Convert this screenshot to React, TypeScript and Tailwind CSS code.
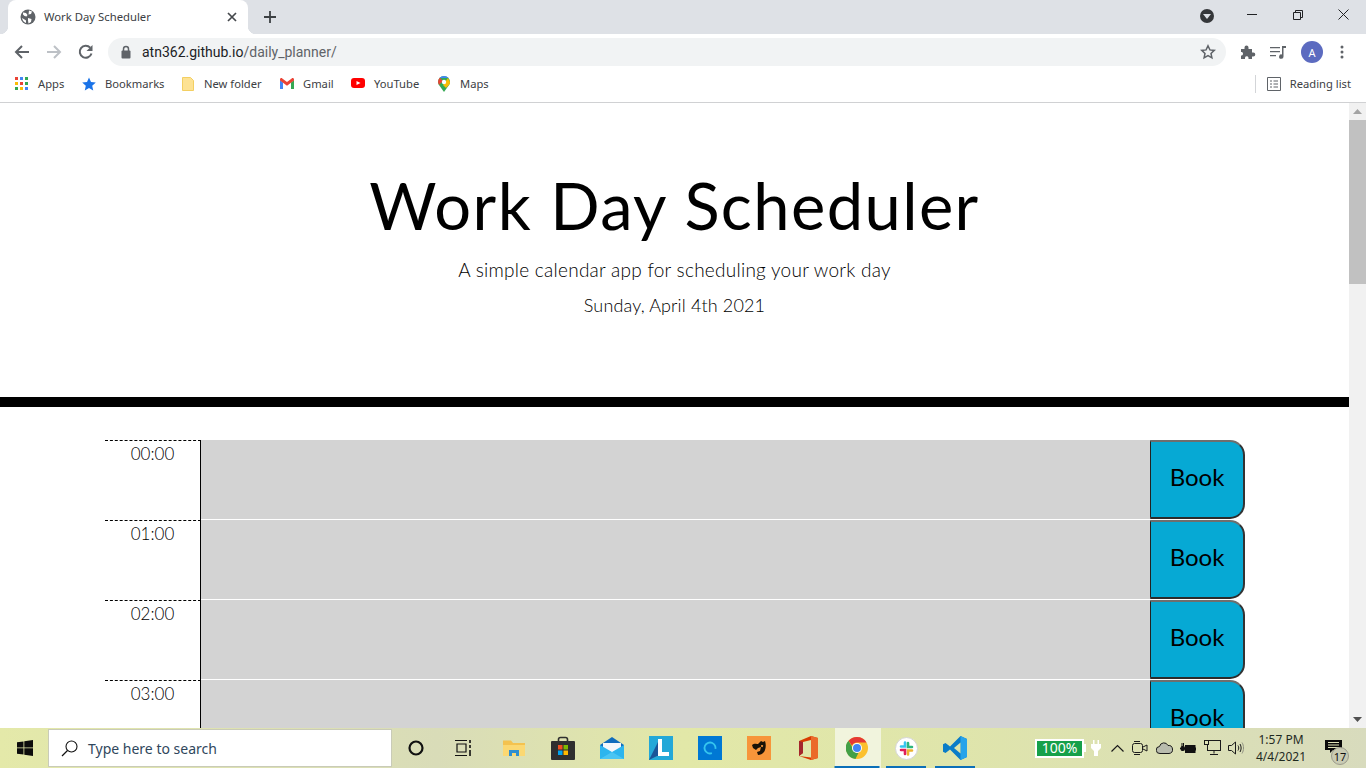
import React from "react";

const ui = { fontFamily: '"Noto Sans", "Open Sans", sans-serif' };
const hand = { fontFamily: 'Lato, "Open Sans", sans-serif' };

function Globe() {
  return (
    <svg width="16" height="16" viewBox="0 0 16 16">
      <circle cx="8" cy="8" r="7.5" fill="#5f6368" />
      <path d="M3 3.5l3 .5 1.5 2-1 1.5-2-.5-1.5-1.5zM9 1.5l3 1-1 2.5-2.5.5zM8 9l3.5 1-.5 3-2.5 1.5-.5-3zM2 9l2.5 1.5 1.500 1v2.500C4 13.500 2.500 11.500 2 9z" fill="#fff" />
    </svg>
  );
}

function Tab() {
  return (
    <div className="relative ml-[8px] flex h-[34px] w-[240px] items-center rounded-t-[8px] bg-white pl-[12px] pr-[11px]">
      <Globe />
      <span className="ml-[8px] flex-1 text-[11.3px] leading-none text-[#3c4043]">Work Day Scheduler</span>
      <svg width="10" height="10" viewBox="0 0 10 10" stroke="#45484c" strokeWidth="1.7" fill="none">
        <path d="M1 1l8 8M9 1l-8 8" />
      </svg>
      <span className="absolute bottom-0 left-[-8px] h-[8px] w-[8px] bg-[radial-gradient(circle_at_0_0,#dee1e6_8px,#fff_8.5px)]" />
      <span className="absolute bottom-0 right-[-8px] h-[8px] w-[8px] bg-[radial-gradient(circle_at_100%_0,#dee1e6_8px,#fff_8.5px)]" />
    </div>
  );
}

function TabStrip() {
  return (
    <div className="flex h-[34px] items-start bg-[#dee1e6]" style={ui}>
      <Tab />
      <svg className="ml-[15px] mt-[10px]" width="14" height="14" viewBox="0 0 14 14" stroke="#3c4043" strokeWidth="1.8">
        <path d="M7 1v12M1 7h12" />
      </svg>
      <div className="flex-1" />
      <div className="mt-[9px] flex h-[14px] w-[14px] items-center justify-center rounded-full bg-[#35373a]">
        <svg width="8" height="5" viewBox="0 0 8 5"><path d="M0 0h8L4 5z" fill="#dee1e6" /></svg>
      </div>
      <div className="ml-[16px] flex w-[136px] pl-[15px] pt-[8px] text-[#202124]">
        <svg width="14" height="14" viewBox="0 0 14 14" stroke="#202124" fill="none"><path d="M2 6.500h10" /></svg>
        <svg className="ml-[32px]" width="14" height="14" viewBox="0 0 14 14" stroke="#202124" fill="none"><path d="M2.500 4.500h7v7h-7zM4.500 4.500V2.500h7v7h-2" /></svg>
        <svg className="ml-[32px]" width="14" height="14" viewBox="0 0 14 14" stroke="#202124" fill="none"><path d="M1.500 1.500l10 10M11.500 1.500l-10 10" /></svg>
      </div>
    </div>
  );
}

function Toolbar() {
  return (
    <div className="flex h-[34px] items-center bg-white pt-[2px]" style={ui}>
      <svg className="ml-[14px]" width="16" height="16" viewBox="0 0 16 16" fill="none" stroke="#5f6368" strokeWidth="2"><path d="M15 8H2M8 2L2 8l6 6" /></svg>
      <svg className="ml-[16px]" width="16" height="16" viewBox="0 0 16 16" fill="none" stroke="#bdc1c6" strokeWidth="2"><path d="M1 8h13M8 2l6 6-6 6" /></svg>
      <svg className="ml-[16px]" width="16" height="16" viewBox="0 0 16 16" fill="none" stroke="#5f6368" strokeWidth="2"><path d="M13.500 9.500A6 6 0 1 1 12.200 3.700" /><path d="M14.500 1v6h-6z" fill="#5f6368" stroke="none" /></svg>
      <div className="ml-[14px] flex h-[28px] w-[1118px] items-center rounded-full bg-[#f1f3f4] pl-[12px] pr-[10px]">
        <svg width="12" height="14" viewBox="0 0 12 14">
          <path d="M3.500 6V4a2.500 2.500 0 0 1 5 0v2" fill="none" stroke="#5f6368" strokeWidth="1.500" />
          <rect x="1.500" y="5.500" width="9" height="8" rx="1" fill="#5f6368" />
        </svg>
        <span className="ml-[10px] flex-1 text-[14px] leading-none text-[#202124]" style={{ fontFamily: 'Roboto, sans-serif' }}>
          atn362.github.io<span className="text-[#5f6368]">/daily_planner/</span>
        </span>
        <svg width="16" height="16" viewBox="0 0 16 16" fill="none" stroke="#5f6368" strokeWidth="1.500"><path d="M8 1.800l1.900 4.100 4.400.5-3.300 3 .9 4.400L8 11.600l-3.900 2.200.9-4.400-3.300-3 4.400-.5z" /></svg>
      </div>
      <svg className="ml-[14px]" width="16" height="16" viewBox="0 0 16 16"><path d="M1 5h3.500V3.500a2 2 0 0 1 4 0V5H12v3.500h1.300a2 2 0 0 1 0 4H12V15H8.500v-1.300a1.800 1.800 0 0 0-3.500 0V15H1v-3.500h1a2 2 0 0 0 0-3.500H1z" fill="#5f6368" /></svg>
      <svg className="ml-[14px]" width="16" height="16" viewBox="0 0 16 16" fill="#5f6368"><path d="M0 3h10v1.300H0zM0 7h10v1.300H0zM0 11h6v1.300H0z" /><path d="M12 2h4v2h-2.500v8.500a2.200 2.200 0 1 1-1.500-2z" /></svg>
      <div className="ml-[15px] flex h-[22px] w-[22px] items-center justify-center rounded-full bg-[#5c6bc0] text-[11px] leading-none text-white">A</div>
      <svg className="ml-[17px]" width="4" height="14" viewBox="0 0 4 14" fill="#5f6368"><circle cx="2" cy="2" r="1.500" /><circle cx="2" cy="7" r="1.500" /><circle cx="2" cy="12" r="1.500" /></svg>
    </div>
  );
}

function AppsIcon() {
  const c = ["#ea4335", "#4285f4", "#34a853", "#fbbc05", "#ea4335", "#34a853", "#34a853", "#fbbc05", "#4285f4"];
  return (
    <div className="grid h-[13px] w-[13px] grid-cols-3 gap-[2px]">
      {c.map((x, i) => <span key={i} className="h-[3px] w-[3px]" style={{ background: x }} />)}
    </div>
  );
}

function Mark({ icon, label, gap, w }: { icon: React.ReactNode; label: string; gap: string; w: string }) {
  return (
    <div className={"flex items-center " + w}>
      {icon}
      <span className={"text-[11.2px] leading-none text-[#3c4043] " + gap}>{label}</span>
    </div>
  );
}

function Bookmarks() {
  return (
    <div className="flex h-[35px] items-center border-b border-[#d0d1d3] bg-white pb-[3px] pl-[15px] pr-[15px]" style={ui}>
      <Mark w="w-[67px]" gap="ml-[10px]" label="Apps" icon={<AppsIcon />} />
      <Mark w="w-[100px]" gap="ml-[9px]" label="Bookmarks" icon={<svg width="14" height="14" viewBox="0 0 14 14"><path d="M7 .5l2 4.500 4.800.5-3.600 3.200 1 4.800L7 11l-4.200 2.500 1-4.800L.2 5.500 5 5z" fill="#1a73e8" /></svg>} />
      <Mark w="w-[98px]" gap="ml-[10px]" label="New folder" icon={<svg width="12" height="14" viewBox="0 0 12 14"><path d="M.5.500h8l3 3v10H.5z" fill="#fde293" stroke="#f3cf62" /></svg>} />
      <Mark w="w-[71px]" gap="ml-[9px]" label="Gmail" icon={<svg width="14" height="11" viewBox="0 0 14 11"><path d="M0 2v9h3V4.500z" fill="#4285f4" /><path d="M14 2v9h-3V4.500z" fill="#34a853" /><path d="M0 1.500C0 .3 1.300-.3 2.300.4L7 4l4.700-3.600c1-.7 2.300-.1 2.300 1.100v1L11 4.800 7 7.800 3 4.800 0 2.500z" fill="#ea4335" /></svg>} />
      <Mark w="w-[87px]" gap="ml-[9px]" label="YouTube" icon={<svg width="14" height="10" viewBox="0 0 14 10"><rect width="14" height="10" rx="3" fill="#f00" /><path d="M5.500 3v4L9.500 5z" fill="#fff" /></svg>} />
      <Mark w="w-[60px]" gap="ml-[10px]" label="Maps" icon={<svg width="12" height="16" viewBox="0 0 12 16"><path d="M6 0a6 6 0 0 1 6 6c0 1-.3 1.900-.8 2.700L6 16 .8 8.700A6 6 0 0 1 0 6a6 6 0 0 1 6-6z" fill="#34a853" /><path d="M1.500 2l9 0A6 6 0 0 0 6 0 6 6 0 0 0 1.500 2z" fill="#4285f4" /><path d="M0 6a6 6 0 0 1 1.800-4.200L5 5l-4 4z" fill="#ea4335" /><path d="M12 6c0 1-.3 1.900-.8 2.700L8 12 5 9l5-7z" fill="#fbbc05" /><circle cx="6" cy="6" r="2.200" fill="#fff" /></svg>} />
      <div className="flex-1" />
      <span className="h-[18px] w-px bg-[#d3d5d8]" />
      <svg className="ml-[11px]" width="14" height="14" viewBox="0 0 14 14" fill="none" stroke="#5f6368"><path d="M.5.500h13v13H.5zM3 4h2M6.500 4H11M3 7h2M6.500 7H11M3 10h2M6.500 10H11" /></svg>
      <span className="ml-[9px] text-[11.2px] leading-none text-[#3c4043]">Reading list</span>
    </div>
  );
}

function Scrollbar() {
  return (
    <div className="flex w-[17px] flex-col items-center bg-[#f1f1f1]">
      <div className="flex h-[17px] items-center justify-center">
        <svg width="9" height="5" viewBox="0 0 9 5"><path d="M4.500 0L9 5H0z" fill="#a3a3a3" /></svg>
      </div>
      <div className="h-[164px] w-full bg-[#c1c1c1]" />
      <div className="flex-1" />
      <div className="flex h-[17px] items-center justify-center">
        <svg width="9" height="5" viewBox="0 0 9 5"><path d="M0 0h9L4.500 5z" fill="#505050" /></svg>
      </div>
    </div>
  );
}

function Row({ time }: { time: string }) {
  return (
    <div className="flex h-[80px] shrink-0">
      <div className="h-full w-[96px] border-r border-t border-dashed border-black pt-[1px] text-center [border-right-style:solid]">
        <div className="h-[22px] text-[17px] font-light leading-[24px] text-black" style={hand}>{time}</div>
      </div>
      <div className="h-full flex-1 border-b border-white bg-[#d3d3d3]" />
      <button className="flex h-[79px] w-[95px] items-center justify-center rounded-r-[15px] border-2 border-b-[#2b2b2b] border-l-[1px] border-l-[#222] border-r-[#333] border-t-[#6e6e6e] bg-[#06a9d4] pb-[6px] text-[24px] leading-none text-black" style={hand}>
        Book
      </button>
    </div>
  );
}

function Page() {
  return (
    <div className="flex h-[625px] w-full overflow-hidden bg-white">
      <main className="flex min-w-0 flex-1 flex-col">
        <header className="flex h-[294px] shrink-0 flex-col items-center text-black" style={hand}>
          <h1 className="mt-[62px] h-[80px] text-[65px] font-normal leading-[80px] tracking-[1.4px]">Work Day Scheduler</h1>
          <p className="mt-[7px] h-[36px] text-[19px] font-light leading-[36px] tracking-[0.26px]">A simple calendar app for scheduling your work day</p>
          <p className="h-[35px] text-[18px] font-light leading-[35px] tracking-[0.14px]">Sunday, April 4th 2021</p>
        </header>
        <div className="h-[10px] shrink-0 bg-black" />
        <div className="ml-[105px] mt-[33px] flex w-[1140px] flex-col">
          {["00:00", "01:00", "02:00", "03:00"].map((t) => <Row key={t} time={t} />)}
        </div>
      </main>
      <Scrollbar />
    </div>
  );
}

const icons: { node: React.ReactNode; bar?: string; active?: boolean }[] = [
  { node: <svg width="18" height="18" viewBox="0 0 18 18" fill="none" stroke="#111" strokeWidth="2.200"><circle cx="9" cy="9" r="6.500" /></svg> },
  { node: <svg width="18" height="18" viewBox="0 0 18 18" fill="none" stroke="#111" strokeWidth="1.200" className="-translate-x-[2px]"><path d="M1 1.500h12M3 5h9v8H3zM1 16.500h12" /><path d="M16 1v3M16 6v3M16 11v6" strokeWidth="1.600" /></svg> },
  { node: <svg width="22" height="18" viewBox="0 0 22 18"><path d="M0 1.500h8l2 2.500h12v13H0z" fill="#f4c24f" /><path d="M0 6h22v11H0z" fill="#fbd872" /><path d="M6 17v-6h10v6h-3v-3H9v3z" fill="#2e8fd0" /></svg> },
  { node: <svg width="24" height="24" viewBox="0 0 24 24"><path d="M7.500 7V3.500A2 2 0 0 1 9.500 1.500h5a2 2 0 0 1 2 2V7" fill="none" stroke="#2f2f2f" strokeWidth="1.600" /><rect y="5" width="24" height="19" rx="1" fill="#2f2f2f" /><rect x="7" y="9" width="4.500" height="4.500" fill="#f25022" /><rect x="12.500" y="9" width="4.500" height="4.500" fill="#7fba00" /><rect x="7" y="14.500" width="4.500" height="4.500" fill="#00a4ef" /><rect x="12.500" y="14.500" width="4.500" height="4.500" fill="#ffb900" /></svg> },
  { node: <svg width="24" height="22" viewBox="0 0 24 22"><path d="M12 0l12 8v14H0V8z" fill="#0f6cbd" /><path d="M3 6h18v7l-9 5-9-5z" fill="#f3f7fb" /><path d="M0 8l12 7 12-7v14H0z" fill="#2cb5ee" /><path d="M0 22L12 15l12 7z" fill="#5fd0f7" opacity=".6" /></svg> },
  { node: <div className="relative h-[24px] w-[24px] bg-[#23a8d8]"><svg width="24" height="24" viewBox="0 0 24 24"><path d="M0 24L10 4v13h9l1 3H8z" fill="#173f8a" opacity=".8" /><path d="M9 3h4v13h7v4H9z" fill="#fff" /></svg></div> },
  { node: <div className="flex h-[24px] w-[24px] items-center justify-center bg-[#0078d4]"><svg width="14" height="14" viewBox="0 0 14 14"><circle cx="7" cy="7" r="5.500" fill="none" stroke="#35c5ee" strokeWidth="1.800" strokeDasharray="28 6" transform="rotate(70 7 7)" /></svg></div> },
  { node: <div className="flex h-[24px] w-[24px] items-center justify-center bg-[#f7953a]"><svg width="17" height="17" viewBox="0 0 17 17"><path d="M1 5c2-2 5-1 6-1l3-3 2 1 2-1c1 3 1 6 0 9-1 3-4 5-7 5l-1-3 3-1 1-4-3 1-2 2-3-2zM11 5a1 1 0 1 0 .1 0z" fill="#1a1208" /></svg></div> },
  { node: <svg width="19" height="24" viewBox="0 0 19 24"><path d="M12 0l7 2v20l-7 2-12-4 12 1.500V4L4 6v11l-4 3V5z" fill="#d83b01" /><path d="M12 0l7 2v20l-7 2z" fill="#eb6a2a" /><path d="M0 5l4 1v11l-4 3z" fill="#a4262c" /></svg> },
  {
    active: true,
    bar: "w-[45px]",
    node: <svg width="22" height="22" viewBox="0 0 22 22">
      <circle cx="11" cy="11" r="11" fill="#fbc02d" />
      <path d="M11 0a11 11 0 0 1 9.500 5.500H11a5.500 5.500 0 0 0-5 3.200L2.500 3.800A11 11 0 0 1 11 0z" fill="#e53935" />
      <path d="M2.500 3.800L6.700 11a5 5 0 0 0 5.800 4.700L9.500 22A11 11 0 0 1 2.500 3.800z" fill="#43a047" />
      <circle cx="11" cy="11" r="5" fill="#fff" /><circle cx="11" cy="11" r="4" fill="#4285f4" />
    </svg>,
  },
  {
    bar: "w-[40px]",
    node: <div className="flex h-[23px] w-[23px] items-center justify-center rounded-full border border-[#d5d5d5] bg-white"><svg width="15" height="15" viewBox="0 0 15 15" strokeWidth="2.600" strokeLinecap="round" fill="none"><path d="M6 1.500v4H2" stroke="#36c5f0" /><path d="M13 6h-4V2" stroke="#2eb67d" /><path d="M9 13.500v-4h4" stroke="#ecb22e" /><path d="M2 9h4v4" stroke="#e01e5a" /></svg></div>,
  },
  {
    bar: "w-[40px]",
    node: <svg width="24" height="24" viewBox="0 0 24 24"><path d="M17.500 0L24 3v18l-6.500 3L7 13.500l-4.500 3.500L0 15.700V8.300L2.500 7 7 10.500z" fill="#0a7cc8" /><path d="M17.500 0L24 3v18l-6.500 3z" fill="#27a3ea" /><path d="M17.500 6.500L11 12l6.500 5.500z" fill="#dfe5ab" /></svg>,
  },
];

function TrayIcon({ children, w }: { children: React.ReactNode; w: string }) {
  return <div className={"flex items-center justify-center " + w}>{children}</div>;
}

function Taskbar() {
  return (
    <div className="flex h-[40px] w-full items-stretch bg-[linear-gradient(90deg,#e4e9a9_0%,#d9dcb8_32%,#e2e8a8_50%,#dfe5ab_70%,#d8dbbd_100%)]" style={ui}>
      <div className="flex w-[48px] items-center justify-center pl-[1px]">
        <svg width="16" height="16" viewBox="0 0 16 16" fill="#0c0c0c"><path d="M0 2.300L6.500 1.400v6.100H0zM7.300 1.300L16 0v7.500H7.300zM0 8.300h6.500v6.300L0 13.700zM7.300 8.300H16V16l-8.700-1.200z" /></svg>
      </div>
      <div className="my-[1px] flex w-[344px] items-center border border-[#c9cbb8] bg-white pl-[12px]">
        <svg width="17" height="17" viewBox="0 0 17 17" fill="none" stroke="#111" strokeWidth="1.100"><circle cx="10.500" cy="6.500" r="5.500" /><path d="M6.500 10.500L1 16" strokeWidth="1.300" /></svg>
        <span className="ml-[10px] pt-[1px] text-[14px] leading-none text-[#30475c]">Type here to search</span>
      </div>
      <div className="-ml-[0.5px] flex">
        {icons.map((ic, i) => (
          <div key={i} className="relative flex w-[49px] items-center justify-center">
            {ic.active && <span className="absolute inset-y-0 left-[2px] w-[46px] bg-[#f1f4dd]" />}
            <span className="relative flex items-center justify-center">{ic.node}</span>
            {ic.bar && <span className={"absolute bottom-0 left-1/2 h-[2px] -translate-x-1/2 bg-[#0b6fb8] " + ic.bar} />}
          </div>
        ))}
      </div>
      <div className="flex-1" />
      <div className="mr-[19px] flex items-center">
        <div className="flex h-[19px] w-[49px] items-center justify-center border-2 border-white bg-[#16a04a] text-[14px] leading-none text-white">100%</div>
        <span className="h-[8px] w-[2px] bg-white" />
        <TrayIcon w="w-[20px]"><svg width="10" height="16" viewBox="0 0 10 16" fill="#fff"><path d="M2 0h1.500v4h3V0H8v4h2v4l-3 3v5H3v-5L0 8V4h2z" /></svg></TrayIcon>
        <TrayIcon w="w-[22px]"><svg width="13" height="8" viewBox="0 0 13 8" fill="none" stroke="#1a1a1a" strokeWidth="1.200"><path d="M.5 7.500l6-6 6 6" /></svg></TrayIcon>
        <TrayIcon w="w-[24px]"><svg width="16" height="16" viewBox="0 0 16 16" fill="none" stroke="#1a1a1a"><rect x=".5" y="3.500" width="10" height="9" rx="2" /><path d="M11 7l4-2v6l-4-2" /><path d="M2 1.500h6M2 14.500h6" /></svg></TrayIcon>
        <TrayIcon w="w-[24px]"><svg width="17" height="12" viewBox="0 0 17 12"><path d="M4 11.500a3.500 3.500 0 0 1-.5-7A4.500 4.500 0 0 1 12 3.500a3.800 3.800 0 0 1 1 8z" fill="#b9bcae" stroke="#1a1a1a" /></svg></TrayIcon>
        <TrayIcon w="w-[24px]"><svg width="16" height="12" viewBox="0 0 16 12" fill="none" stroke="#111"><rect x="5.500" y="3.500" width="9.500" height="7" fill="#111" /><path d="M15.500 5.500v3" /><path d="M0 6.500h4M2 1v3.500M3.500 1v3.500" /><rect x="1" y="4.500" width="3.500" height="4" rx="1" fill="#111" /></svg></TrayIcon>
        <TrayIcon w="w-[24px]"><svg width="17" height="16" viewBox="0 0 17 16" fill="none" stroke="#1a1a1a"><rect x="3.500" y=".5" width="13" height="10" /><rect x=".5" y=".5" width="4" height="4" fill="#e0e4b8" /><path d="M10 10.500v3M6 14.500h8" /></svg></TrayIcon>
        <TrayIcon w="w-[23px]"><svg width="16" height="14" viewBox="0 0 16 14" fill="none" stroke="#1a1a1a"><path d="M.5 4.500h3l4-3.500v12l-4-3.500h-3z" /><path d="M10 4.500c1 1.500 1 3.500 0 5M12 3c1.500 2.500 1.500 5.500 0 8" /><path d="M14 1.500c2 3 2 8 0 11" stroke="#8e9080" /></svg></TrayIcon>
        <div className="ml-[2px] flex w-[64px] flex-col items-center gap-[4px] text-[12px] leading-[13px] text-[#1f2a1f]">
          <span>1:57 PM</span>
          <span>4/4/2021</span>
        </div>
        <div className="relative ml-[12px] h-full w-[22px] pt-[12px]">
          <svg width="17" height="13" viewBox="0 0 17 13"><path d="M0 0h17v10H8l-3 3v-3H0z" fill="#0a0a0a" /><path d="M3 2.500h11M3 5h11M3 7.500h11" stroke="#e0e3b8" /></svg>
          <span className="absolute left-[6px] top-[19px] flex h-[18px] w-[18px] items-center justify-center rounded-full border border-[#9b9b8c] bg-[#c9cbb3] text-[11px] leading-none text-[#111]">17</span>
        </div>
      </div>
    </div>
  );
}

export default function App() {
  return (
    <div className="flex h-[768px] w-[1366px] flex-col overflow-hidden bg-white">
      <TabStrip />
      <Toolbar />
      <Bookmarks />
      <Page />
      <Taskbar />
    </div>
  );
}
